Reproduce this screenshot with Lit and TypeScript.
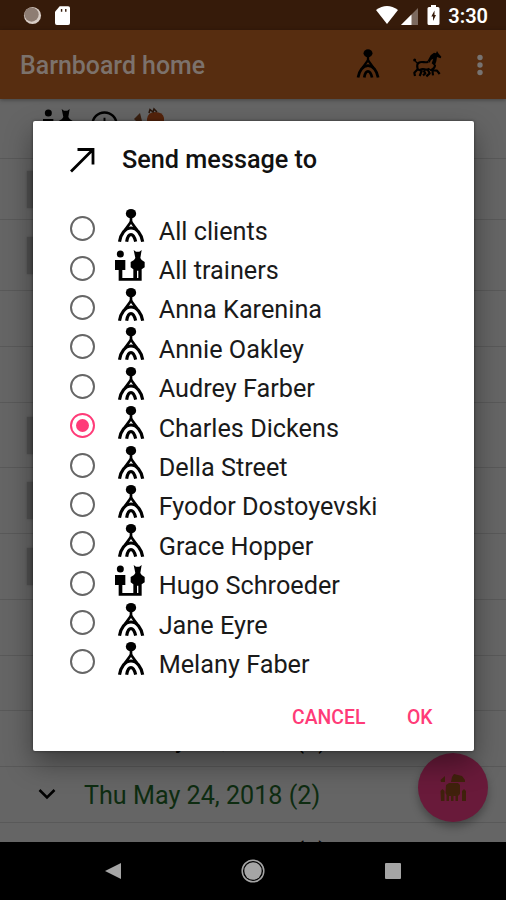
import { LitElement, html, css, svg } from "lit";
import { customElement, property } from "lit/decorators.js";

const icons: Record<string, { box: string; art: unknown }> = {
  client: {
    box: "170 24 90 105",
    art: svg`<ellipse cx="215" cy="41" rx="15.500" ry="14"/><path d="M215 50V72" fill="none" stroke="currentColor" stroke-width="8"/><path d="M215 65L197 90M215 65L233 90" fill="none" stroke="currentColor" stroke-width="8"/><path d="M180.500 125C184 102 197 84 215 84S246 102 250 125M202 125C204 113 209 104 215 104S226 113 229 125" fill="none" stroke="currentColor" stroke-width="9.500"/>`,
  },
  trainer: {
    box: "170 142 90 105",
    art: svg`<circle cx="183" cy="160" r="10.500"/><path d="M167 178H198V208H189V232H222V206L214 200V184L224 178L228 172L223 148L230 153H240L247 148L243 172L247 178L256 184V200L247 206V240H178V208H167ZM233 210V232H237V210Z" fill-rule="evenodd"/>`,
  },
  horse: {
    box: "215 55 90 90",
    art: svg`<circle cx="223" cy="88" r="4.500"/><path d="M225 92L234 100" fill="none" stroke="currentColor" stroke-width="4"/><path d="M262 90L271 74L281 66L287 68L290 61L294 68L303 78L301 83L290 79L288 92L283 106L274 98L279 84L272 88L268 96Z"/><path d="M264 93C252 99 246 89 234 97C228 102 231 110 232 116L222 126L224 136M232 116L244 121L238 136M240 117C250 111 258 122 268 114M262 117L268 128L258 137M284 102C284 112 277 116 272 118L290 120L298 130M276 118L278 134M250 120L255 128L248 134" fill="none" stroke="currentColor" stroke-width="6.500" stroke-linejoin="round"/>`,
  },
  calf: {
    box: "0 0 28 30",
    art: svg`<path d="M1.500 7L6 3V9H2ZM13 4L15 1L23 3L26 7V9H12ZM7 12L10 10H19L21 12V21L19 23V28H16.500V23H14.500V28H12V23H10V28H7.500V22L6.500 20ZM1.500 18L3.500 16L5.500 18V28H2ZM23 18L25 16L27 18V28H23Z"/>`,
  },
  arrow: {
    box: "0 0 28 28",
    art: svg`<path d="M2 25.500L24 3.500M8.500 3.500H24V18.500" fill="none" stroke="currentColor" stroke-width="2.800"/>`,
  },
  chevron: {
    box: "0 0 18 12",
    art: svg`<path d="M1.500 2L9 9.500L16.500 2" fill="none" stroke="currentColor" stroke-width="2.500"/>`,
  },
  more: {
    box: "0 0 6 22",
    art: svg`<circle cx="3" cy="3.500" r="2.700"/><circle cx="3" cy="11" r="2.700"/><circle cx="3" cy="18.500" r="2.700"/>`,
  },
  sync: {
    box: "0 0 20 20",
    art: svg`<circle cx="10" cy="10" r="9" fill="#d8cdc6"/><circle cx="9" cy="9" r="7.500" fill="#8e7d73"/>`,
  },
  sd: {
    box: "0 0 16 20",
    art: svg`<path d="M5 0H14Q16 0 16 2V18Q16 20 14 20H2Q0 20 0 18V6Z"/><path d="M7 3V6M11.500 3V6" stroke="#361b0a" stroke-width="1.500"/>`,
  },
  wifi: {
    box: "0 0 22 18",
    art: svg`<path d="M0 4Q11-4 22 4L11 18Z"/>`,
  },
  signal: {
    box: "0 0 17 17",
    art: svg`<path d="M17 0V17H0Z" opacity=".35"/><path d="M10.500 6.500V17H0Z"/>`,
  },
  battery: {
    box: "0 0 12 20",
    art: svg`<path d="M3.500 0H8.500V2H10.500Q12 2 12 3.500V18.500Q12 20 10.500 20H1.500Q0 20 0 18.500V3.500Q0 2 1.500 2H3.500Z"/><path d="M7 5.500L3.800 11.500H5.500V16L8.500 10H7Z" fill="#361b0a"/>`,
  },
  clock: {
    box: "0 0 28 28",
    art: svg`<circle cx="14" cy="14" r="12.500" fill="none" stroke="currentColor" stroke-width="2.500"/><path d="M14 7V15H20" fill="none" stroke="currentColor" stroke-width="2"/>`,
  },
  rooster: {
    box: "0 0 32 28",
    art: svg`<path d="M1 11L7 5L9 13L5 15Z" fill="#3b2010"/><path d="M14 11Q15 4 22 4Q30 4 31 10V20H14Z" fill="#54230b"/><path d="M16 5L17 1.500L20 4L21 1L24 4" fill="none" stroke="#27140a" stroke-width="1.500"/>`,
  },
  back: { box: "0 0 16 18", art: svg`<path d="M16 1V17L0 9Z"/>` },
  home: {
    box: "0 0 24 24",
    art: svg`<circle cx="12" cy="12" r="10.800" fill="none" stroke="currentColor" stroke-width="1.500"/><circle cx="12" cy="12" r="8.700"/>`,
  },
  recent: { box: "0 0 16 16", art: svg`<rect width="16" height="16" rx="1"/>` },
};

@customElement("app-icon")
export class AppIcon extends LitElement {
  @property() name = "client";
  static styles = css`
    :host { display: block; flex: none; }
    svg { display: block; width: 100%; height: 100%; fill: currentColor; overflow: visible; }
  `;
  render() {
    const icon = icons[this.name];
    return html`<svg viewBox=${icon.box}>${icon.art}</svg>`;
  }
}

const recipients: [string, string][] = [
  ["All clients", "client"],
  ["All trainers", "trainer"],
  ["Anna Karenina", "client"],
  ["Annie Oakley", "client"],
  ["Audrey Farber", "client"],
  ["Charles Dickens", "client"],
  ["Della Street", "client"],
  ["Fyodor Dostoyevski", "client"],
  ["Grace Hopper", "client"],
  ["Hugo Schroeder", "trainer"],
  ["Jane Eyre", "client"],
  ["Melany Faber", "client"],
];

const rows: { height: number; bar?: boolean }[] = [
  { height: 61, bar: true },
  { height: 71, bar: true },
  { height: 56 },
  { height: 56 },
  { height: 65, bar: true },
  { height: 66, bar: true },
  { height: 66, bar: true },
  { height: 56 },
  { height: 55 },
];

@customElement("app-root")
export class AppRoot extends LitElement {
  @property() selected = "Charles Dickens";

  static styles = css`
    :host { display: block; }
    * { box-sizing: border-box; }
    .screen { position: relative; display: flex; flex-direction: column; width: 506px; height: 900px; overflow: hidden; background: #656565; font-family: Roboto, "Liberation Sans", sans-serif; color: #000; }
    .status { flex: none; height: 30px; display: flex; align-items: center; padding: 0 18px 0 23px; background: #361b0a; color: #fff; }
    .sync { width: 19px; height: 19px; margin-right: 13px; }
    .sd { width: 15px; height: 19px; margin-right: auto; }
    .wifi { width: 22px; height: 18px; margin-right: 3px; }
    .signal { width: 17px; height: 17px; margin: 2px 9px 0 0; }
    .battery { width: 13px; height: 20px; margin-right: 8px; }
    .time { font-size: 20px; font-weight: 600; line-height: 30px; margin-top: 2px; }
    .bar { flex: none; height: 69px; display: flex; align-items: center; padding: 0 23px 0 20px; background: #572d10; box-shadow: 0 1px 4px rgba(0, 0, 0, .35); z-index: 1; }
    .bar h1 { margin: 2px auto 0 0; font-size: 24.9px; font-weight: 500; line-height: 32px; color: #7c726c; }
    .bar .client { width: 26px; height: 31px; margin: -2px 31px 0 0; }
    .bar .horse { width: 30px; height: 30px; margin: -2px 35px 0 0; }
    .bar .more { width: 6px; height: 22px; color: #777371; }
    .list { flex: 1; min-height: 0; overflow: hidden; display: flex; flex-direction: column; }
    .tools { flex: none; height: 60px; display: flex; gap: 17px; padding: 8px 0 0 44px; border-bottom: 1px solid #595959; }
    .tools .trainer { width: 30px; height: 35px; }
    .tools .clock { width: 27px; height: 27px; margin-top: 4px; }
    .tools .rooster { width: 32px; height: 28px; margin: 1px 0 0 -2px; }
    .row { flex: none; border-bottom: 1px solid #595959; display: flex; align-items: center; padding-left: 27px; }
    .mark { width: 40px; height: 37px; background: #505050; box-shadow: 0 0 2px #505050; }
    .day { flex: none; height: 56px; display: flex; align-items: center; padding-left: 38px; gap: 28px; border-bottom: 1px solid #595959; font-size: 25.15px; }
    .day app-icon { width: 18px; height: 12px; margin-top: -1px; }
    .day span { line-height: 34px; margin-top: 3px; }
    .day:last-child span { margin-top: 5px; }
    .green { color: #0e2c11; }
    .green app-icon { color: #000; }
    .nav { flex: none; height: 58px; background: #000; color: #a5a5a5; display: flex; align-items: center; justify-content: space-between; padding: 0 105px; z-index: 1; }
    .back { width: 16px; height: 18px; }
    .home { width: 24px; height: 24px; }
    .recent { width: 16px; height: 16px; }
    .fab { position: absolute; right: 18px; top: 753px; width: 70px; height: 69px; border-radius: 50%; background: #691a3a; color: #40210c; display: grid; place-items: center; box-shadow: 0 5px 9px rgba(0, 0, 0, .3); }
    .fab app-icon { width: 28px; height: 30px; }
    .dialog { position: absolute; left: 33px; top: 121px; width: 441px; height: 630px; border-radius: 2px; background: #fff; box-shadow: 0 0 3px rgba(0, 0, 0, .5), 0 12px 28px rgba(0, 0, 0, .4); display: flex; flex-direction: column; z-index: 2; }
    .head { flex: none; display: flex; align-items: center; height: 76px; gap: 25px; padding: 0 0 0 36px; }
    .head app-icon { width: 28px; height: 28px; margin-top: 1px; }
    .head h2 { margin: 1px 0 0; font-size: 25.25px; line-height: 32px; font-weight: 500; color: #111; }
    .options { flex: none; margin-top: 13px; }
    .option { display: flex; align-items: center; height: 39.4px; padding-left: 37px; font-size: 25.25px; }
    .radio { width: 25px; height: 25px; margin-top: -2px; border: 2px solid #666; border-radius: 50%; display: grid; place-items: center; }
    .radio.on { border: 2.5px solid #ff3b78; }
    .radio.on::after { content: ""; width: 13px; height: 13px; border-radius: 50%; background: #ff3b78; }
    .option app-icon { width: 30px; height: 35px; margin: -8px 12.5px 0 21.2px; }
    .name { line-height: 32px; margin-top: 4px; color: #1a1a1a; }
    .actions { display: flex; gap: 41.5px; justify-content: flex-end; margin: 23px 41.5px 0 0; font-size: 19.4px; line-height: 24px; font-weight: 500; color: #ff3b78; }
  `;

  render() {
    return html`<div class="screen">
      <div class="status">
        <app-icon class="sync" name="sync"></app-icon>
        <app-icon class="sd" name="sd"></app-icon>
        <app-icon class="wifi" name="wifi"></app-icon>
        <app-icon class="signal" name="signal"></app-icon>
        <app-icon class="battery" name="battery"></app-icon>
        <span class="time">3:30</span>
      </div>
      <div class="bar">
        <h1>Barnboard home</h1>
        <app-icon class="client" name="client"></app-icon>
        <app-icon class="horse" name="horse"></app-icon>
        <app-icon class="more" name="more"></app-icon>
      </div>
      <div class="list">
        <div class="tools">
          <app-icon class="trainer" name="trainer"></app-icon>
          <app-icon class="clock" name="clock"></app-icon>
          <app-icon class="rooster" name="rooster"></app-icon>
        </div>
        ${rows.map((r) => html`<div class="row" style="height:${r.height}px">${r.bar ? html`<div class="mark"></div>` : ""}</div>`)}
        <div class="day"><app-icon name="chevron"></app-icon><span>Wed May 23, 2018 (2)</span></div>
        <div class="day green"><app-icon name="chevron"></app-icon><span>Thu May 24, 2018 (2)</span></div>
        <div class="day"><app-icon name="chevron"></app-icon><span>Wed May 30, 2018 (2)</span></div>
      </div>
      <div class="nav">
        <app-icon class="back" name="back"></app-icon>
        <app-icon class="home" name="home"></app-icon>
        <app-icon class="recent" name="recent"></app-icon>
      </div>
      <div class="fab"><app-icon name="calf"></app-icon></div>
      <div class="dialog">
        <div class="head"><app-icon name="arrow"></app-icon><h2>Send message to</h2></div>
        <div class="options">
          ${recipients.map(([name, icon]) => html`<div class="option">
            <div class="radio ${name === this.selected ? "on" : ""}"></div>
            <app-icon name=${icon}></app-icon>
            <span class="name">${name}</span>
          </div>`)}
        </div>
        <div class="actions"><span>CANCEL</span><span>OK</span></div>
      </div>
    </div>`;
  }
}
